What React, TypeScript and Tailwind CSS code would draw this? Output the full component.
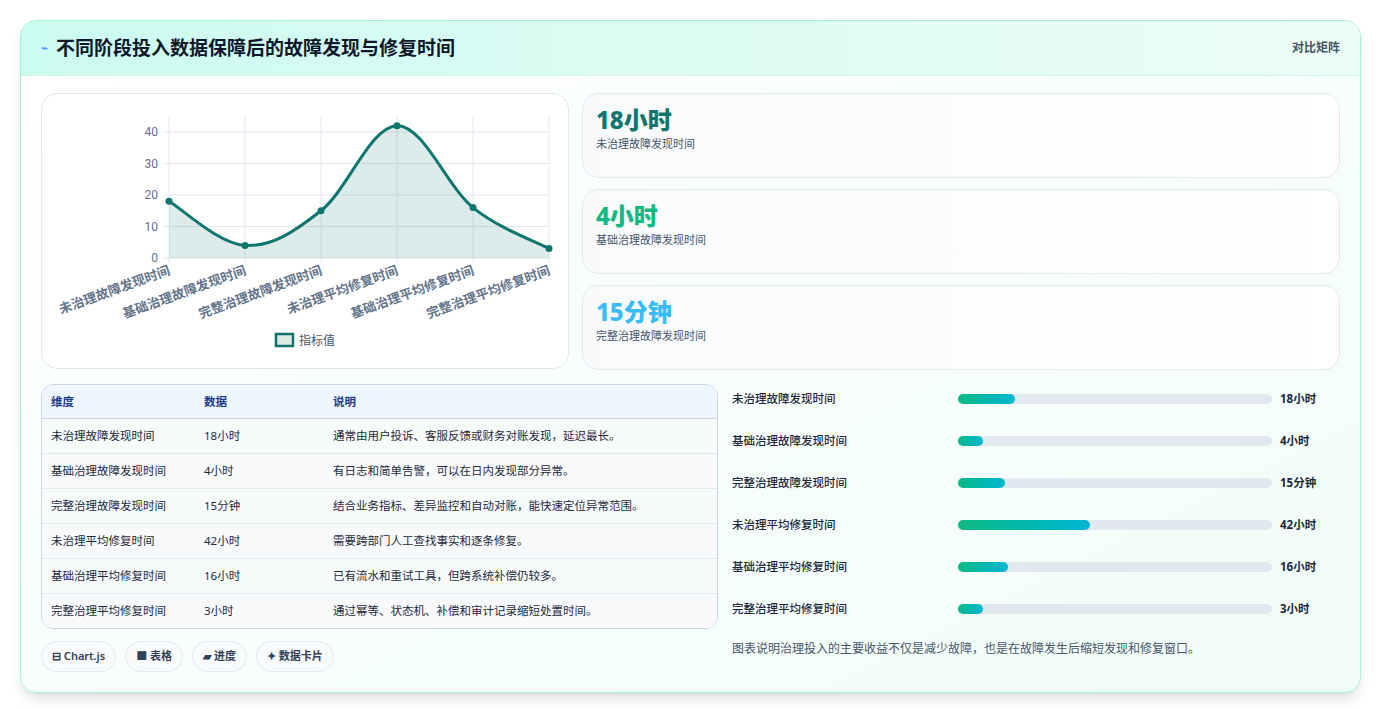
const rows = [
  { name: "未治理故障发现时间", v: "18小时", n: 18, d: "通常由用户投诉、客服反馈或财务对账发现，延迟最长。" },
  { name: "基础治理故障发现时间", v: "4小时", n: 4, d: "有日志和简单告警，可以在日内发现部分异常。" },
  { name: "完整治理故障发现时间", v: "15分钟", n: 15, d: "结合业务指标、差异监控和自动对账，能快速定位异常范围。" },
  { name: "未治理平均修复时间", v: "42小时", n: 42, d: "需要跨部门人工查找事实和逐条修复。" },
  { name: "基础治理平均修复时间", v: "16小时", n: 16, d: "已有流水和重试工具，但跨系统补偿仍较多。" },
  { name: "完整治理平均修复时间", v: "3小时", n: 3, d: "通过幂等、状态机、补偿和审计记录缩短处置时间。" },
];

const stats = [
  { v: "18小时", l: "未治理故障发现时间", c: "text-[#0f766e]" },
  { v: "4小时", l: "基础治理故障发现时间", c: "text-[#10b981]" },
  { v: "15分钟", l: "完整治理故障发现时间", c: "text-[#38bdf8]" },
];

function Chart() {
  const xs = [127, 203, 279, 355, 431, 507];
  const y = (v: number) => 164 - v * 3.15;
  const pts = rows.map((r, i) => [xs[i], y(r.n)]);
  let d = `M${pts[0][0]},${pts[0][1]}`;
  for (let i = 1; i < pts.length; i++) {
    const [x0, y0] = pts[i - 1];
    const [x1, y1] = pts[i];
    const p = pts[i - 2] || pts[i - 1];
    const n = pts[i + 1] || pts[i];
    const t = 0.35;
    d += ` C${x0 + (x1 - p[0]) * t / 2},${y0 + (y1 - p[1]) * t / 2} ${x1 - (n[0] - x0) * t / 2},${y1 - (n[1] - y0) * t / 2} ${x1},${y1}`;
  }
  const area = d + ` L507,164 L127,164 Z`;
  return (
    <svg width="526" height="273" className="block" style={{ fontFamily: "Roboto, 'Noto Sans CJK SC', sans-serif" }}>
      {[0, 10, 20, 30, 40].map((t) => (
        <g key={t}>
          <line x1="122" x2="507" y1={y(t)} y2={y(t)} stroke="#e2e8f0" />
          <text x="116" y={y(t) + 4} textAnchor="end" fontSize="12" fill="#64748b">{t}</text>
        </g>
      ))}
      {xs.map((x) => (
        <line key={x} x1={x} x2={x} y1="22" y2="169" stroke="#e2e8f0" />
      ))}
      <path d={area} fill="#0f766e" fillOpacity="0.14" />
      <path d={d} fill="none" stroke="#0f766e" strokeWidth="3" />
      {pts.map(([px, py], i) => (
        <circle key={i} cx={px} cy={py} r="3.5" fill="#0f766e" />
      ))}
      {rows.map((r, i) => (
        <text key={i} x={xs[i] + 2} y="180" textAnchor="end" fontSize="13" fontWeight="600" fill="#64748b" transform={`rotate(-20 ${xs[i] + 2} 180)`} style={{ fontFamily: "'Noto Sans CJK SC', sans-serif" }}>{r.name}</text>
      ))}
      <rect x="234" y="240" width="17" height="12" fill="#dbe9e7" stroke="#0f766e" strokeWidth="2.5" />
      <text x="257" y="251" fontSize="12" fill="#475569" style={{ fontFamily: "'Noto Sans CJK SC', sans-serif" }}>指标值</text>
    </svg>
  );
}

export default function App() {
  return (
    <div className="min-h-[708px] bg-white p-5" style={{ fontFamily: "'Noto Sans', 'Noto Sans CJK SC', sans-serif" }}>
      <div className="overflow-hidden rounded-2xl border border-[#a7f3d0] bg-gradient-to-br from-white to-[#f0fdf9] shadow-lg">
        <div className="flex h-[55px] items-center justify-between border-b border-[#d1fae5] bg-gradient-to-r from-[#ccfbf1] to-[#ecfdf5] px-5">
          <div className="flex items-center gap-2">
            <span className="text-xs text-[#3b82f6]">⌁</span>
            <h1 className="text-[19px] font-bold text-[#0f172a]">不同阶段投入数据保障后的故障发现与修复时间</h1>
          </div>
          <span className="text-xs font-semibold text-[#475569]">对比矩阵</span>
        </div>
        <div className="p-5 pt-[17px]">
          <div className="flex gap-[13px]">
            <div className="h-[276px] w-[528px] shrink-0 rounded-2xl border border-[#e2e8f0] bg-white">
              <Chart />
            </div>
            <div className="flex flex-1 flex-col gap-[11px]">
              {stats.map((s) => (
                <div key={s.l} className="h-[85px] rounded-2xl border border-[#e2e8f0] bg-gradient-to-r from-[#f8fafc] to-white px-[13px] pt-[10px]">
                  <div className={`text-[24px] font-extrabold leading-[32px] ${s.c}`}>{s.v}</div>
                  <div className="text-[11px] text-[#475569]">{s.l}</div>
                </div>
              ))}
            </div>
          </div>
          <div className="mt-[14px] flex gap-[14px]">
            <div className="w-[677px] shrink-0">
              <div className="overflow-hidden rounded-xl border border-[#cbd5e1] bg-white">
                <table className="w-full text-left text-[11.5px] text-[#1e293b]">
                  <thead>
                    <tr className="h-[33px] border-b border-[#cbd5e1] bg-[#eff6ff] text-[#1e3a8a]">
                      <th className="w-[162px] pl-[9px] font-bold">维度</th>
                      <th className="w-[121px] font-bold">数据</th>
                      <th className="pl-[8px] font-bold">说明</th>
                    </tr>
                  </thead>
                  <tbody>
                    {rows.map((r, i) => (
                      <tr key={r.name} className={`h-[35px] border-b border-[#e2e8f0] last:border-b-0 ${i % 2 ? "bg-[#f8fafc]" : "bg-[#f7fcfb]"}`}>
                        <td className="pl-[9px]">{r.name}</td>
                        <td>{r.v}</td>
                        <td className="pl-[8px]">{r.d}</td>
                      </tr>
                    ))}
                  </tbody>
                </table>
              </div>
              <div className="mt-[12px] flex gap-[9px]">
                {["⊟ Chart.js", "■ 表格", "▰ 进度", "✦ 数据卡片"].map((t) => (
                  <span key={t} className="rounded-full border border-[#e2e8f0] bg-[#f8fafc] px-[10px] py-[6px] text-[11px] font-semibold text-[#334155]">{t}</span>
                ))}
              </div>
            </div>
            <div className="-mt-[6px] flex-1">
              {rows.map((r) => (
                <div key={r.name} className="flex h-[42px] items-center text-[11.5px] font-medium text-[#1e293b]">
                  <span className="w-[226px]">{r.name}</span>
                  <div className="h-[10px] w-[314px] rounded-full bg-[#e2e8f0]">
                    <div className="h-full rounded-full bg-gradient-to-r from-[#10b981] to-[#06b6d4]" style={{ width: `${Math.max(r.n, 8)}%` }} />
                  </div>
                  <span className="ml-[8px] font-bold">{r.v}</span>
                </div>
              ))}
              <p className="mt-[10px] text-[12px] text-[#475569]">图表说明治理投入的主要收益不仅是减少故障，也是在故障发生后缩短发现和修复窗口。</p>
            </div>
          </div>
        </div>
      </div>
    </div>
  );
}
